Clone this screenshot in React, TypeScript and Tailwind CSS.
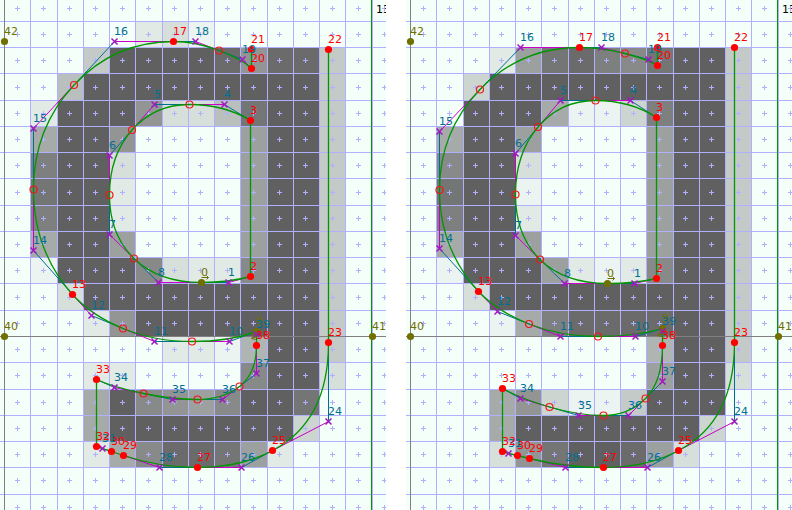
type Kind = 'start' | 'on' | 'off';
type Point = { n: number; x: number; y: number; kind: Kind };
type Glyph = { name: string; coords: [number, number][]; cells: string[] };

const COLUMNS = [4, 30, 57, 83, 109, 135, 162, 188, 214, 240, 267, 293, 319, 345, 372];
const ROWS = [21, 47, 73, 100, 126, 152, 178, 205, 231, 257, 283, 310, 336, 362, 389, 415, 441, 467, 494];
const CENTRE_X = [17, 43, 69, 95, 122, 148, 174, 200, 227, 253, 279, 305, 332, 358, 384];
const CENTRE_Y = [8, 34, 60, 87, 113, 139, 165, 192, 218, 244, 270, 297, 323, 349, 375, 402, 428, 454, 480, 507];

const ON_CURVE = [2, 3, 13, 17, 20, 21, 22, 23, 25, 27, 29, 30, 32, 33, 38];
const CONTOURS: [number, number][] = [[0, 8], [9, 39]];

const RED = '#ff0000';
const TEAL = '#007090';
const OLIVE = '#707000';
const GREEN = '#009600';
const MAGENTA = '#c800c8';

// One hex digit of pixel coverage per cell, starting at the first grid column.
const glyphs: Glyph[] = [
  {
    name: 'Unhinted outline',
    coords: [
      [201, 282], [228, 282], [250, 276], [250, 120], [224, 104], [154, 104], [109, 155], [109, 234], [158, 282],
      [256, 331], [229, 341], [154, 341], [91, 315], [72, 294], [33, 250], [33, 128], [114, 41], [173, 41],
      [195, 41], [242, 59], [251, 68], [251, 49], [328, 49], [328, 342], [328, 421], [272, 450], [241, 467],
      [197, 467], [159, 467], [123, 455], [111, 451], [102, 448], [96, 446], [96, 379], [114, 387], [172, 399],
      [222, 399], [256, 373], [256, 345], [256, 334],
    ],
    cells: [
      '0000023100000',
      '0005ffffeaee5',
      '006fffffffff5',
      '02fffa336dff5',
      '08ffa00009ff5',
      '0cff300009ff5',
      '0dff200009ff5',
      '0cff200009ff5',
      '08ff900009ff5',
      '01fffb322bff5',
      '003fffffffff5',
      '0002afffffff5',
      '0000002217ff5',
      '000220000bff3',
      '0008fba9bffd0',
      '0008fffffff40',
      '00028beed9200',
    ],
  },
  {
    name: 'Hinted outline',
    coords: [
      [201, 283], [228, 283], [250, 278], [250, 117], [224, 100], [154, 100], [109, 153], [109, 235], [158, 283],
      [256, 328], [229, 336], [154, 336], [91, 311], [72, 291], [33, 248], [33, 131], [114, 47], [173, 47],
      [195, 47], [242, 59], [251, 65], [251, 47], [328, 47], [328, 342], [328, 421], [272, 450], [241, 467],
      [197, 467], [159, 467], [123, 458], [111, 455], [102, 453], [96, 451], [96, 388], [114, 398], [172, 415],
      [222, 415], [256, 381], [256, 345], [256, 331],
    ],
    cells: [
      '0000000000000',
      '00029decbdff5',
      '004fffffffff5',
      '00fff8114cff5',
      '08ff900009ff5',
      '0bff300009ff5',
      '0dff100009ff5',
      '0cff200009ff5',
      '08ff900009ff5',
      '01fff9212bff5',
      '003fffffffff5',
      '00018ceeeeff5',
      '0000000007ff5',
      '0000000009ff3',
      '0008a4115fff0',
      '0008fffffff40',
      '0003adffe9300',
    ],
  },
];

function toPoints(coords: [number, number][]): Point[] {
  return coords.map(([x, y], n) => ({
    n,
    x,
    y,
    kind: n === 0 || n === 9 ? 'start' : ON_CURVE.includes(n) ? 'on' : 'off',
  }));
}

function trace(points: Point[]) {
  let path = `M${points[0].x} ${points[0].y}`;
  const handles: { from: [number, number]; to: [number, number]; color: string }[] = [];
  const implied: [number, number][] = [];
  let current: [number, number] = [points[0].x, points[0].y];
  for (let i = 1; i <= points.length; i++) {
    const p = points[i % points.length];
    if (p.kind !== 'off') {
      // The top edge from 21 to 22 stays open; only its end points are shown.
      if (p.n === 22) path += `M${p.x} ${p.y}`;
      else if (points[i - 1].kind !== 'off') path += `L${p.x} ${p.y}`;
      current = [p.x, p.y];
      continue;
    }
    const next = points[(i + 1) % points.length];
    let end: [number, number] = [next.x, next.y];
    if (next.kind === 'off') {
      end = [(p.x + next.x) / 2, (p.y + next.y) / 2];
      implied.push(end);
    }
    handles.push({ from: current, to: [p.x, p.y], color: TEAL });
    handles.push({ from: [p.x, p.y], to: end, color: MAGENTA });
    path += `Q${p.x} ${p.y} ${end[0]} ${end[1]}`;
    current = end;
  }
  return { path, handles, implied };
}

function shade(level: number) {
  const t = level / 15;
  const mix = (from: number, to: number) => Math.round(from + (to - from) * t);
  return `rgb(${mix(245, 96)},${mix(255, 96)},${mix(250, 96)})`;
}

function PixelGrid({ cells }: { cells: string[] }) {
  return (
    <g shapeRendering="crispEdges">
      {cells.map((row, r) =>
        [...row].map((digit, c) =>
          digit === '0' ? null : (
            <rect
              key={`${r}-${c}`}
              x={COLUMNS[c]}
              y={ROWS[r]}
              width={COLUMNS[c + 1] - COLUMNS[c] + 1}
              height={ROWS[r + 1] - ROWS[r] + 1}
              fill={shade(parseInt(digit, 16))}
            />
          ),
        ),
      )}
      {COLUMNS.slice(1).map((x) => <rect key={x} x={x} y={0} width={1} height="100%" fill="#b0b0ff" />)}
      {ROWS.map((y) => <rect key={y} x={0} y={y} width="100%" height={1} fill="#b0b0ff" />)}
      {CENTRE_Y.map((y) =>
        CENTRE_X.map((x) => <path key={`${x}-${y}`} d={`M${x - 2} ${y}h5v1h-5zM${x} ${y - 2}h1v5h-1z`} fill="#b0b0ff" />),
      )}
      <rect x={4} y={0} width={1} height="100%" fill="#808080" />
      <rect x={0} y={336} width="100%" height={1} fill="#808080" />
      <rect x={371} y={0} width={1} height="100%" fill={GREEN} />
    </g>
  );
}

function Label({ x, y, n, color }: { x: number; y: number; n: number; color: string }) {
  return <text x={x} y={y - 6} fill={color}>{n}</text>;
}

function Marker({ point }: { point: Point }) {
  const { x, y, kind } = point;
  if (kind === 'off') return <path d={`M${x - 3} ${y - 3}l6 6m0 -6l-6 6`} stroke="#a018c0" strokeWidth={1.5} />;
  return <circle cx={x} cy={y} r={3.6} fill={kind === 'on' ? RED : OLIVE} />;
}

function GlyphPanel({ glyph }: { glyph: Glyph }) {
  const points = toPoints(glyph.coords);
  const contours = CONTOURS.map(([first, last]) => trace(points.slice(first, last + 1)));
  const second = points[9];
  const phantoms: [number, number, number][] = [[40, 4, 336], [41, 372, 336], [42, 4, 41]];
  return (
    <svg
      role="img"
      aria-label={glyph.name}
      className="h-full min-w-0 flex-1 overflow-hidden bg-[#f5fffa] font-['DejaVu_Sans',sans-serif] text-[11px]"
    >
      <PixelGrid cells={glyph.cells} />
      <g transform="translate(0.5 0.5)" fill="none">
        {contours.map(({ path, handles, implied }, i) => (
          <g key={i}>
            {handles.map((h, k) => (
              <path key={k} d={`M${h.from[0]} ${h.from[1]}L${h.to[0]} ${h.to[1]}`} stroke={h.color} />
            ))}
            <path d={path} stroke={GREEN} strokeWidth={1.3} />
            {implied.map(([x, y]) => (
              <circle key={`${x}-${y}`} cx={x} cy={y} r={3.5} stroke="#f01818" strokeWidth={1.2} />
            ))}
          </g>
        ))}
        {points.map((p) => <Marker key={p.n} point={p} />)}
        {phantoms.map(([n, x, y]) => <circle key={n} cx={x} cy={y} r={3.6} fill={OLIVE} />)}
        <path d={`M${points[0].x} ${points[0].y - 5}h7m-2 -2l2 2l-2 2`} stroke={OLIVE} />
        <path d={`M${second.x + 1} ${second.y + 5}l-6 2m3 -4l-3 4l4 1`} stroke={OLIVE} />
      </g>
      {points.map((p) => (
        <Label key={p.n} x={p.x} y={p.y} n={p.n} color={p.kind === 'on' ? RED : p.kind === 'off' ? TEAL : OLIVE} />
      ))}
      {phantoms.map(([n, x, y]) => <Label key={n} x={x} y={y} n={n} color={OLIVE} />)}
      <text x={376} y={13} fill="#000000">13</text>
    </svg>
  );
}

export default function App() {
  return (
    <main className="flex h-screen gap-5 overflow-hidden bg-white">
      {glyphs.map((glyph) => <GlyphPanel key={glyph.name} glyph={glyph} />)}
    </main>
  );
}
